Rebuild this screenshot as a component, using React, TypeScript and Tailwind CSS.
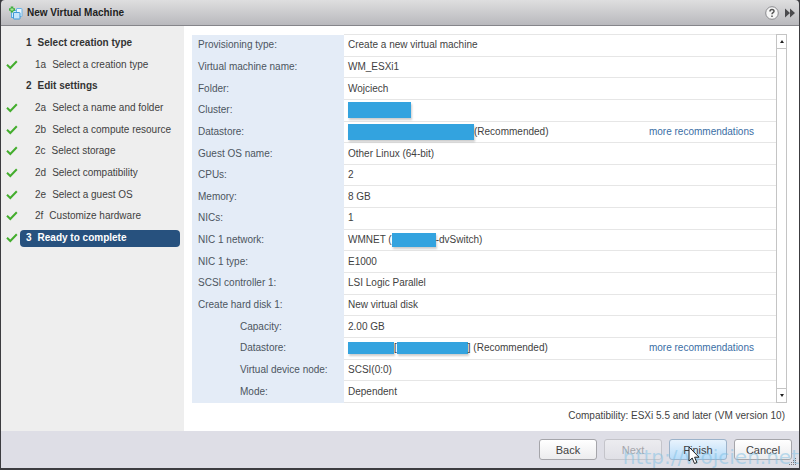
import type { ReactNode } from 'react';

interface Step {
  label: string;
  kind: 'group' | 'item' | 'current';
  num: string;
  done?: boolean;
}

const steps: Step[] = [
  { num: '1', label: 'Select creation type', kind: 'group' },
  { num: '1a', label: 'Select a creation type', kind: 'item', done: true },
  { num: '2', label: 'Edit settings', kind: 'group' },
  { num: '2a', label: 'Select a name and folder', kind: 'item', done: true },
  { num: '2b', label: 'Select a compute resource', kind: 'item', done: true },
  { num: '2c', label: 'Select storage', kind: 'item', done: true },
  { num: '2d', label: 'Select compatibility', kind: 'item', done: true },
  { num: '2e', label: 'Select a guest OS', kind: 'item', done: true },
  { num: '2f', label: 'Customize hardware', kind: 'item', done: true },
  { num: '3', label: 'Ready to complete', kind: 'current', done: true },
];

interface Row {
  name: string;
  value: ReactNode;
  nested?: boolean;
  more?: boolean;
}

const bar = 'inline-block shrink-0 bg-[#33a3df] shadow-[1px_2px_2px_rgba(0,0,0,0.2)]';

const rows: Row[] = [
  { name: 'Provisioning type:', value: 'Create a new virtual machine' },
  { name: 'Virtual machine name:', value: 'WM_ESXi1' },
  { name: 'Folder:', value: 'Wojciech' },
  { name: 'Cluster:', value: <span className={`${bar} h-4 w-[63px]`} /> },
  {
    name: 'Datastore:',
    value: (
      <>
        <span className={`${bar} h-4 w-[126px]`} />
        (Recommended)
      </>
    ),
    more: true,
  },
  { name: 'Guest OS name:', value: 'Other Linux (64-bit)' },
  { name: 'CPUs:', value: '2' },
  { name: 'Memory:', value: '8 GB' },
  { name: 'NICs:', value: '1' },
  {
    name: 'NIC 1 network:',
    value: (
      <>
        WMNET (
        <span className={`${bar} h-3.5 w-11`} />
        -dvSwitch)
      </>
    ),
  },
  { name: 'NIC 1 type:', value: 'E1000' },
  { name: 'SCSI controller 1:', value: 'LSI Logic Parallel' },
  { name: 'Create hard disk 1:', value: 'New virtual disk' },
  { name: 'Capacity:', value: '2.00 GB', nested: true },
  {
    name: 'Datastore:',
    value: (
      <>
        <span className={`${bar} h-3 w-[46px]`} />
        [
        <span className={`${bar} h-3 w-[71px]`} />
        ] (Recommended)
      </>
    ),
    nested: true,
    more: true,
  },
  { name: 'Virtual device node:', value: 'SCSI(0:0)', nested: true },
  { name: 'Mode:', value: 'Dependent', nested: true },
];

function CheckIcon() {
  return (
    <svg viewBox="0 0 12 10" className="h-2.5 w-3" aria-hidden="true">
      <path d="M1 4.8 4.3 8 10.8 1.2" fill="none" stroke="#43ad2d" strokeWidth="2" />
    </svg>
  );
}

function VmIcon() {
  return (
    <svg viewBox="0 0 14 14" className="size-3.5" aria-hidden="true">
      <rect x="2.5" y="4.5" width="6" height="7" fill="#d3ebfb" stroke="#58a9e0" />
      <rect x="7.5" y="2.5" width="5.5" height="8" rx=".5" fill="#e9f6fe" stroke="#6ab4e6" />
      <rect x="4.5" y="6.5" width="6.5" height="6.5" rx=".5" fill="#c5e5fa" stroke="#3e97d8" />
      <path d="M3 .5v6M0 3.5h6" stroke="#3fae3c" strokeWidth="2.6" />
      <path d="M3 2v3M1.500 3.500h3" stroke="#a9e29c" strokeWidth="1" />
    </svg>
  );
}

function TitleBar() {
  return (
    <header className="flex h-[26px] shrink-0 items-center rounded-t border-b border-[#85858a] bg-linear-to-b from-[#dededf] to-[#b9b9bd] pl-2 pr-1">
      <VmIcon />
      <h1 className="ml-1 flex-1 font-bold text-[#222]">New Virtual Machine</h1>
      <button type="button" aria-label="Help" className="mr-1.5">
        <svg viewBox="0 0 14 14" className="size-3.5" aria-hidden="true">
          <circle cx="7" cy="7" r="6.3" fill="#f6f6f6" stroke="#8a8a8e" />
          <path d="M5 5.4c0-2.6 4-2.6 4-.2 0 1.5-2 1.5-2 3.1M7 9.4v1.5" fill="none" stroke="#555" strokeWidth="1.5" />
        </svg>
      </button>
      <button type="button" aria-label="Collapse">
        <svg viewBox="0 0 10 10" className="size-2.5" aria-hidden="true">
          <path d="M0 .5 5 5 0 9.5zM5 .5 10 5 5 9.5z" fill="#4a4a4d" />
        </svg>
      </button>
    </header>
  );
}

function StepList() {
  return (
    <nav className="w-[183px] shrink-0 bg-[#eee] pr-1 pt-1.5">
      <ol className="grid h-[217px] auto-rows-fr">
        {steps.map((step) => (
          <li key={step.num} className="flex items-center">
            <span className="w-[19px] shrink-0 pl-[5px]">{step.done && <CheckIcon />}</span>
            {step.kind === 'group' && (
              <span className="flex gap-1.5 pl-1.5 font-bold text-[#333]">
                <span>{step.num}</span>
                <span>{step.label}</span>
              </span>
            )}
            {step.kind === 'item' && (
              <a href="#" className="flex gap-1.5 whitespace-nowrap pl-[15px]">
                <span>{step.num}</span>
                <span>{step.label}</span>
              </a>
            )}
            {step.kind === 'current' && (
              <a href="#" aria-current="step" className="flex h-[17px] flex-1 items-center gap-1.5 rounded bg-[#27517e] pl-1.5 font-bold text-white">
                <span>{step.num}</span>
                <span>{step.label}</span>
              </a>
            )}
          </li>
        ))}
      </ol>
    </nav>
  );
}

function Summary() {
  return (
    <div className="flex min-h-0 flex-1">
      <table className="h-full flex-1 border-collapse">
        <tbody>
          {rows.map((row, i) => (
            <tr key={i}>
              <th scope="row" className={`w-[152px] bg-[#e4ecf7] p-0 text-left font-normal text-[#4c5560] ${row.nested ? 'pl-12' : 'pl-1.5'}`}>
                {row.name}
              </th>
              <td className="border-y border-[#e6e6e6] p-0 pl-1">
                <div className="flex h-4 items-center whitespace-pre">
                  {row.value}
                  {row.more && (
                    <a href="#" className="ml-auto mr-[22px] text-[#3a6ea5]">
                      more recommendations
                    </a>
                  )}
                </div>
              </td>
            </tr>
          ))}
        </tbody>
      </table>
      <div className="flex w-[11px] flex-col justify-between border border-[#c4c4c4] bg-white">
        <button type="button" aria-label="Scroll up" className="flex h-3.5 items-center justify-center border-b border-[#c4c4c4]">
          <svg viewBox="0 0 4 3" className="h-[3px] w-1" aria-hidden="true">
            <path d="M0 3 2 0l2 3z" fill="#222" />
          </svg>
        </button>
        <button type="button" aria-label="Scroll down" className="flex h-3.5 items-center justify-center border-t border-[#c4c4c4]">
          <svg viewBox="0 0 4 3" className="h-[3px] w-1" aria-hidden="true">
            <path d="M0 0h4L2 3z" fill="#222" />
          </svg>
        </button>
      </div>
    </div>
  );
}

function Footer() {
  const base = 'h-[21px] w-[58px] rounded-[3px] border bg-linear-to-b';
  return (
    <footer className="relative flex h-[37px] shrink-0 items-center justify-end gap-[7px] bg-[#dedee6] pr-[7px] text-[11px]">
      <button type="button" className={`${base} border-[#a5a5aa] from-white to-[#ececee]`}>Back</button>
      <button type="button" disabled className={`${base} border-[#c4c4ca] from-[#ececf0] to-[#e0e0e6] text-[#a5a5aa]`}>Next</button>
      <button type="button" className={`${base} border-[#9db3ca] from-[#e8f3fd] to-[#b8dcf8]`}>Finish</button>
      <button type="button" className={`${base} border-[#a5a5aa] from-white to-[#ececee]`}>Cancel</button>
      <span className="pointer-events-none absolute bottom-0 right-0 whitespace-nowrap font-['DejaVu_Sans'] text-[20px] leading-[22px] text-[#7fc0e4]/50">
        http://wojcien.net
      </span>
      <svg viewBox="0 0 8 8" className="absolute bottom-0.5 right-0.5 size-2" aria-hidden="true">
        <path d="M6 0h1v1H6zM4 2h1v1H4zM6 2h1v1H6zM2 4h1v1H2zM4 4h1v1H4zM6 4h1v1H6zM0 6h1v1H0zM2 6h1v1H2zM4 6h1v1H4zM6 6h1v1H6z" fill="#77777d" />
      </svg>
      <svg viewBox="0 0 12 19" className="absolute right-[99px] top-[15px] h-[19px] w-3" aria-hidden="true">
        <path d="M1 1v14l3.2-3 2.3 5.5 2.4-1-2.3-5.3H11z" fill="#fff" stroke="#222" />
      </svg>
    </footer>
  );
}

export default function App() {
  return (
    <div className="flex h-screen flex-col border-b-2 border-l border-r border-[#3c3c40] bg-[#3c3c40] font-['Liberation_Sans',Arial,sans-serif] text-[10px] leading-[14px] text-[#3f3f3f]">
      <TitleBar />
      <div className="flex min-h-0 flex-1 bg-white">
        <StepList />
        <main className="flex flex-1 flex-col pl-2 pr-3 pt-2">
          <Summary />
          <p className="pb-2 pr-0.5 pt-1.5 text-right">Compatibility: ESXi 5.5 and later (VM version 10)</p>
        </main>
      </div>
      <Footer />
    </div>
  );
}
